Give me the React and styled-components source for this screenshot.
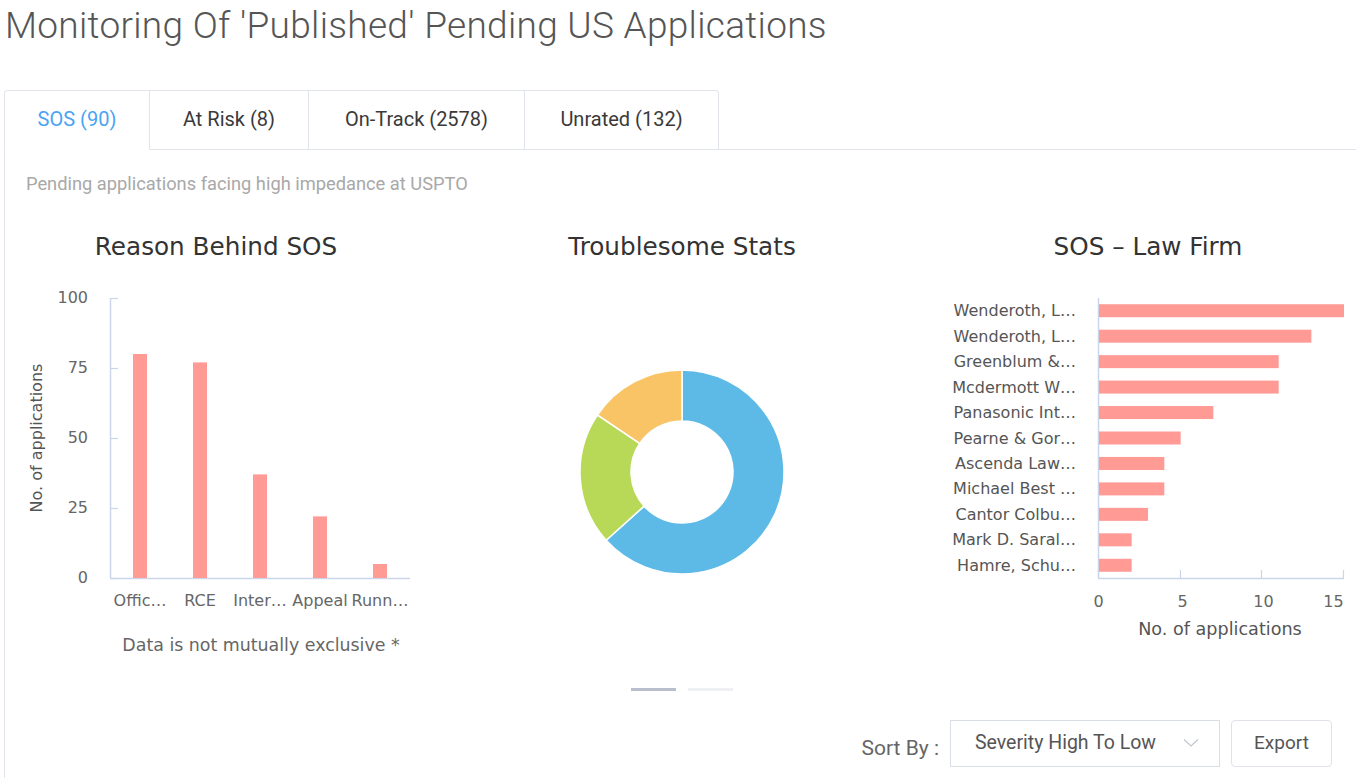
import React from "react";
import styled, { createGlobalStyle } from "styled-components";

const GlobalStyle = createGlobalStyle`
  html, body { margin: 0; padding: 0; background: #ffffff; }
  body { overflow: hidden; font-family: Roboto, "Liberation Sans", sans-serif; }
  * { box-sizing: border-box; }
`;

const BORDER = "#e1e4ea";
const CHART_FONT = `"DejaVu Sans", Verdana, sans-serif`;
const BAR = "#ff9a95";

const Page = styled.div`
  width: 1356px;
  height: 778px;
  padding-left: 4px;
`;

const Title = styled.h1`
  margin: 0;
  font-family: Roboto, "Liberation Sans", sans-serif;
  font-weight: 300;
  font-size: 37px;
  line-height: 52px;
  color: #555555;
  padding-left: 1px;
  letter-spacing: 0.3px;
`;

const TabList = styled.div`
  display: flex;
  margin-top: 38px;
  height: 60px;
`;

const Tab = styled.div`
  display: flex;
  align-items: center;
  justify-content: center;
  width: ${(p) => p.$w}px;
  height: 60px;
  padding-bottom: 3px;
  font-size: 20px;
  color: ${(p) => (p.$active ? "#4aa3f3" : "#3a3a3a")};
  border-top: 1px solid ${BORDER};
  border-right: 1px solid ${BORDER};
  border-left: ${(p) => (p.$first ? `1px solid ${BORDER}` : "none")};
  border-bottom: 1px solid ${(p) => (p.$active ? "#ffffff" : BORDER)};
  border-top-left-radius: ${(p) => (p.$first ? "4px" : "0")};
  border-top-right-radius: ${(p) => (p.$last ? "4px" : "0")};
  background: #ffffff;
`;

const TabFill = styled.div`
  flex: 1;
  border-bottom: 1px solid ${BORDER};
`;

const Card = styled.div`
  border-left: 1px solid ${BORDER};
  height: 628px;
  display: flex;
  flex-direction: column;
`;

const Subtitle = styled.div`
  padding: 24px 0 0 21px;
  font-size: 18.3px;
  line-height: 20px;
  color: #a8a8a8;
`;

const ChartsRow = styled.div`
  display: grid;
  grid-template-columns: 422px 510px 422px;
  align-items: start;
  padding-top: 26px;
`;

const ChartCol = styled.div`
  display: flex;
  flex-direction: column;
  align-items: center;
`;

const ChartTitle = styled.div`
  font-family: ${CHART_FONT};
  font-size: 24.7px;
  line-height: 54px;
  color: #333333;
  text-align: center;
  width: 100%;
`;

const ChartSvg = styled.svg`
  display: block;
  font-family: ${CHART_FONT};
  overflow: visible;
`;

const Dots = styled.div`
  display: flex;
  gap: 12px;
  margin-top: 14px;
`;

const Dot = styled.div`
  width: 45px;
  height: 3px;
  background: ${(p) => (p.$active ? "#b9bfcc" : "#eef0f3")};
`;

const Controls = styled.div`
  display: flex;
  justify-content: flex-end;
  align-items: center;
  gap: 11px;
  margin-top: 29px;
  padding-right: 24px;
`;

const SortLabel = styled.span`
  font-size: 21px;
  color: #666666;
  margin-top: 8px;
`;

const Select = styled.div`
  width: 270px;
  height: 47px;
  border: 1px solid #d9dde5;
  display: flex;
  align-items: center;
  justify-content: space-between;
  padding: 0 20px 2px 24px;
  font-size: 19.5px;
  color: #555555;
`;

const ExportButton = styled.button`
  width: 101px;
  height: 47px;
  border: 1px solid #dfe2e8;
  border-radius: 4px;
  background: #ffffff;
  font-family: Roboto, "Liberation Sans", sans-serif;
  font-size: 19px;
  color: #555555;
  padding: 0 0 2px;
`;

const AXIS = "#ccd6eb";
const LABEL = "#666666";

function ReasonChart() {
  const data = [
    ["Offic…", 80],
    ["RCE", 77],
    ["Inter…", 37],
    ["Appeal", 22],
    ["Runn…", 5],
  ];
  const y0 = 304;
  const unit = 2.8;
  const ticks = [0, 25, 50, 75, 100];
  return (
    <ChartSvg width="422" height="400">
      <line x1="105.5" y1="24" x2="105.5" y2="304" stroke={AXIS} strokeWidth="1.5" />
      <line x1="105" y1="304.5" x2="405" y2="304.5" stroke={AXIS} strokeWidth="1.5" />
      {ticks.map((t) => {
        const y = Math.round(y0 - t * unit) + 0.5;
        return (
          <g key={t}>
            <line x1="105" y1={y} x2="113" y2={y} stroke={AXIS} strokeWidth="1.2" />
            <text x="83" y={y} textAnchor="end" dominantBaseline="middle" fontSize="16" fill={LABEL}>
              {t}
            </text>
          </g>
        );
      })}
      {data.map(([name, v], i) => {
        const cx = 135 + i * 60;
        const h = v * unit;
        return (
          <g key={name}>
            <rect x={cx - 7} y={y0 - h} width="14" height={h} fill={BAR} />
            <text x={cx} y="327" textAnchor="middle" dominantBaseline="middle" fontSize="16" fill={LABEL}>
              {name}
            </text>
          </g>
        );
      })}
      <text
        x="32"
        y="164"
        transform="rotate(-90 32 164)"
        textAnchor="middle"
        dominantBaseline="middle"
        fontSize="16"
        fill="#555555"
      >
        No. of applications
      </text>
      <text x="256" y="372" textAnchor="middle" dominantBaseline="middle" fontSize="17.4" fill={LABEL}>
        Data is not mutually exclusive *
      </text>
    </ChartSvg>
  );
}

function arcPath(cx, cy, r0, r1, a0, a1) {
  const p = (r, a) => {
    const rad = (a * Math.PI) / 180;
    return [cx + r * Math.sin(rad), cy - r * Math.cos(rad)];
  };
  const large = a1 - a0 > 180 ? 1 : 0;
  const [x1, y1] = p(r1, a0);
  const [x2, y2] = p(r1, a1);
  const [x3, y3] = p(r0, a1);
  const [x4, y4] = p(r0, a0);
  return `M${x1} ${y1} A${r1} ${r1} 0 ${large} 1 ${x2} ${y2} L${x3} ${y3} A${r0} ${r0} 0 ${large} 0 ${x4} ${y4} Z`;
}

function DonutChart() {
  const data = [
    [57, "#5dbae6"],
    [19, "#b8d957"],
    [14, "#f9c466"],
  ];
  const total = data.reduce((s, d) => s + d[0], 0);
  let a = 0;
  return (
    <ChartSvg width="510" height="400">
      {data.map(([v, c], i) => {
        const a0 = a;
        const a1 = a + (v / total) * 360;
        a = a1;
        return <path key={i} d={arcPath(255, 198, 51, 102, a0, a1)} fill={c} stroke="#ffffff" strokeWidth="1.5" />;
      })}
    </ChartSvg>
  );
}

function FirmChart() {
  const data = [
    ["Wenderoth, L…", 15],
    ["Wenderoth, L…", 13],
    ["Greenblum &…", 11],
    ["Mcdermott W…", 11],
    ["Panasonic Int…", 7],
    ["Pearne & Gor…", 5],
    ["Ascenda Law…", 4],
    ["Michael Best …", 4],
    ["Cantor Colbu…", 3],
    ["Mark D. Saral…", 2],
    ["Hamre, Schu…", 2],
  ];
  const x0 = 161;
  const unit = 245 / 15;
  const rowH = 280 / 11;
  const ticks = [0, 5, 10, 15];
  return (
    <ChartSvg width="422" height="400">
      <line x1={x0 + 0.5} y1="24" x2={x0 + 0.5} y2="304" stroke={AXIS} strokeWidth="1.5" />
      <line x1={x0} y1="304.5" x2={x0 + 246} y2="304.5" stroke={AXIS} strokeWidth="1.5" />
      {ticks.map((t) => {
        const x = Math.round(x0 + t * unit) + 0.5;
        return (
          <g key={t}>
            <line x1={x} y1="296" x2={x} y2="304" stroke={AXIS} strokeWidth="1.2" />
            <text
              x={t === 15 ? x - 10 : t === 0 ? x : x + 2}
              y="328"
              textAnchor="middle"
              dominantBaseline="middle"
              fontSize="16"
              fill={LABEL}
            >
              {t}
            </text>
          </g>
        );
      })}
      {data.map(([name, v], i) => {
        const cy = 24 + (i + 0.5) * rowH;
        return (
          <g key={i}>
            <rect x={x0 + 1} y={cy - 6.5} width={v * unit} height="13" fill={BAR} />
            <text x="139" y={cy + 1} textAnchor="end" dominantBaseline="middle" fontSize="16" fill="#555555">
              {name}
            </text>
          </g>
        );
      })}
      <text x="283" y="356" textAnchor="middle" dominantBaseline="middle" fontSize="17.6" fill="#555555">
        No. of applications
      </text>
    </ChartSvg>
  );
}

function Chevron() {
  return (
    <svg width="16" height="10" viewBox="0 0 16 10">
      <polyline points="1,1.5 8,8 15,1.5" fill="none" stroke="#c2c6cf" strokeWidth="1.2" />
    </svg>
  );
}

const tabs = [
  { label: "SOS (90)", w: 146, active: true },
  { label: "At Risk (8)", w: 159 },
  { label: "On-Track (2578)", w: 216 },
  { label: "Unrated (132)", w: 194 },
];

export default function App() {
  return (
    <>
      <GlobalStyle />
      <Page>
        <Title>Monitoring Of 'Published' Pending US Applications</Title>
        <TabList>
          {tabs.map((t, i) => (
            <Tab key={t.label} $w={t.w} $active={t.active} $first={i === 0} $last={i === tabs.length - 1}>
              {t.label}
            </Tab>
          ))}
          <TabFill />
        </TabList>
        <Card>
          <Subtitle>Pending applications facing high impedance at USPTO</Subtitle>
          <ChartsRow>
            <ChartCol>
              <ChartTitle>Reason Behind SOS</ChartTitle>
              <ReasonChart />
            </ChartCol>
            <ChartCol>
              <ChartTitle>Troublesome Stats</ChartTitle>
              <DonutChart />
              <Dots>
                <Dot $active />
                <Dot />
              </Dots>
            </ChartCol>
            <ChartCol>
              <ChartTitle>SOS – Law Firm</ChartTitle>
              <FirmChart />
            </ChartCol>
          </ChartsRow>
          <Controls>
            <SortLabel>Sort By :</SortLabel>
            <Select>
              <span>Severity High To Low</span>
              <Chevron />
            </Select>
            <ExportButton>Export</ExportButton>
          </Controls>
        </Card>
      </Page>
    </>
  );
}
